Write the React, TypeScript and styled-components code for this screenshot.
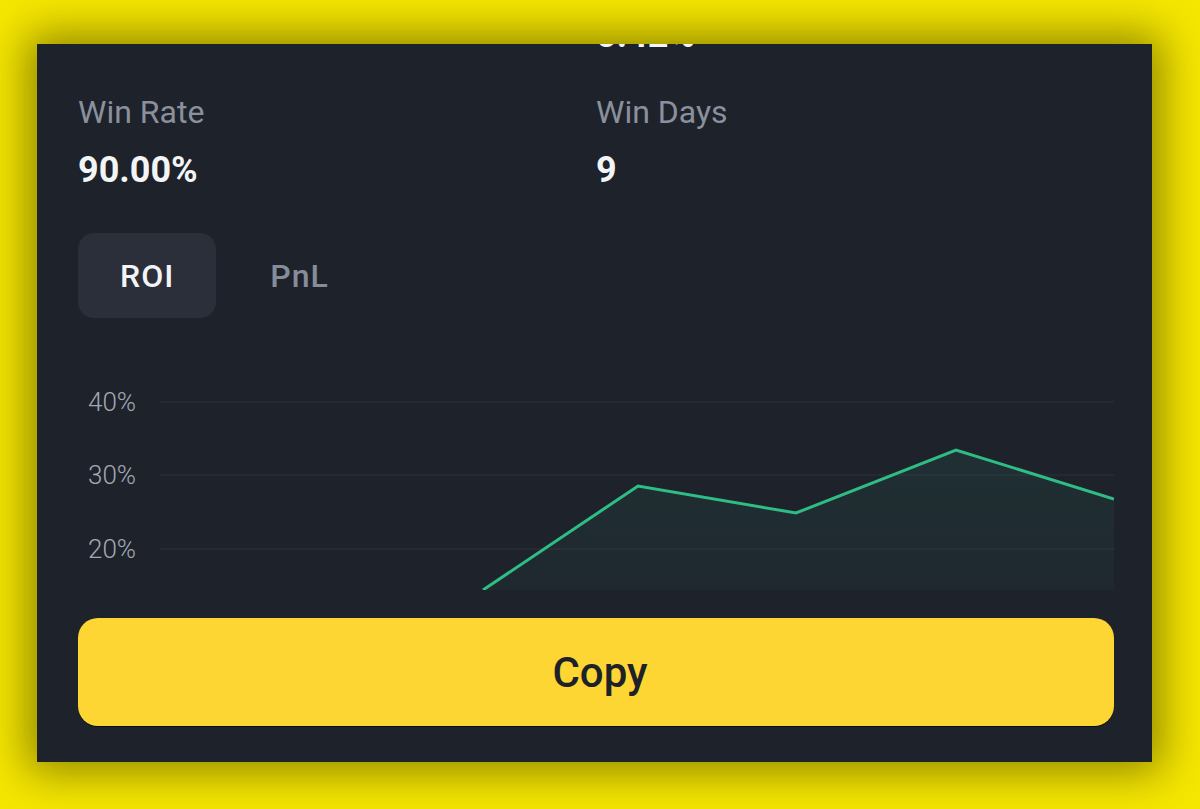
import React, { useState } from 'react';
import styled, { createGlobalStyle } from 'styled-components';

const GlobalStyle = createGlobalStyle`
  html, body {
    margin: 0;
    padding: 0;
    background: #f6e700;
    height: 809px;
    overflow: hidden;
  }
  * { box-sizing: border-box; }
`;

const Page = styled.div`
  width: 1200px;
  height: 809px;
  padding: 44px 0 0 37px;
  font-family: Roboto, "Noto Sans", "Liberation Sans", sans-serif;
`;

const Panel = styled.section`
  width: 1115px;
  background: #1e222b;
  padding: 0 38px 36px 41px;
  overflow: hidden;
  box-shadow: 0 0 42px 10px rgba(0, 0, 0, 0.42);
`;

// the first row scrolled mostly out of view, as in a scrolled sheet
const StatGrid = styled.div`
  display: grid;
  grid-template-columns: 1fr 1fr;
  row-gap: 35px;
  margin-top: -87px;
`;

const Stat = styled.div`
  display: flex;
  flex-direction: column;
  gap: 16px;
`;

const StatLabel = styled.div`
  font-size: 32px;
  line-height: 40px;
  color: #8a919d;
`;

const StatValue = styled.div`
  font-size: 36px;
  line-height: 44px;
  font-weight: 700;
  color: #f3f4f6;
`;

const Tabs = styled.div`
  display: flex;
  gap: 12px;
  margin-top: 41px;
`;

const Tab = styled.button<{ $active?: boolean }>`
  height: 85px;
  padding: 0 42px;
  border: none;
  border-radius: 16px;
  background: ${(p) => (p.$active ? '#2a2f39' : 'transparent')};
  color: ${(p) => (p.$active ? '#f3f4f6' : '#868d99')};
  font-family: inherit;
  font-size: 32px;
  letter-spacing: 1px;
  font-weight: 500;
  cursor: pointer;
`;

const ChartBox = styled.div`
  height: 272px;
`;

const CopyButton = styled.button`
  width: 100%;
  height: 108px;
  margin-top: 28px;
  padding-left: 14px;
  border: none;
  border-radius: 20px;
  background: #fed634;
  box-shadow: 0 1px 0 rgba(0, 0, 0, 0.6);
  color: #1e2228;
  font-family: inherit;
  font-size: 42px;
  font-weight: 500;
  cursor: pointer;
`;

const stats = [
  { label: '', value: '' },
  { label: 'Max Drawdown', value: '5.42%' },
  { label: 'Win Rate', value: '90.00%' },
  { label: 'Win Days', value: '9' },
];

const grid = [
  { y: 84, label: '40%' },
  { y: 157, label: '30%' },
  { y: 231, label: '20%' },
];

const points: [number, number][] = [
  [405, 272],
  [560, 168],
  [718, 195],
  [878, 132],
  [1036, 181],
];

const RoiChart: React.FC = () => {
  const line = points.map(([x, y]) => `${x},${y}`).join(' ');
  const area = `405,272 ${line} 1036,272`;
  return (
    <ChartBox>
      <svg width="1036" height="272" viewBox="0 0 1036 272">
        <defs>
          <linearGradient id="roiFill" x1="0" y1="0" x2="0" y2="1">
            <stop offset="0" stopColor="#2ebd85" stopOpacity="0.09" />
            <stop offset="1" stopColor="#2ebd85" stopOpacity="0.04" />
          </linearGradient>
        </defs>
        {grid.map((g) => (
          <g key={g.label}>
            <line x1="82" x2="1036" y1={g.y} y2={g.y} stroke="#2c313b" strokeWidth="1.2" />
            <text
              x="10"
              y={g.y + 9}
              fill="#a3a9b3"
              fontSize="26"
              fontFamily="Roboto, 'Noto Sans', sans-serif"
              fontWeight="300"
            >
              {g.label}
            </text>
          </g>
        ))}
        <polygon points={area} fill="url(#roiFill)" />
        <polyline points={line} fill="none" stroke="#2ebd85" strokeWidth="3" strokeLinejoin="miter" />
      </svg>
    </ChartBox>
  );
};

export default function App() {
  const [tab, setTab] = useState<'roi' | 'pnl'>('roi');
  return (
    <>
      <GlobalStyle />
      <Page>
        <Panel>
          <StatGrid>
            {stats.map((s, i) => (
              <Stat key={i}>
                <StatLabel>{s.label || '\u00a0'}</StatLabel>
                <StatValue>{s.value || '\u00a0'}</StatValue>
              </Stat>
            ))}
          </StatGrid>
          <Tabs>
            <Tab $active={tab === 'roi'} onClick={() => setTab('roi')}>ROI</Tab>
            <Tab $active={tab === 'pnl'} onClick={() => setTab('pnl')}>PnL</Tab>
          </Tabs>
          <RoiChart />
          <CopyButton>Copy</CopyButton>
        </Panel>
      </Page>
    </>
  );
}
